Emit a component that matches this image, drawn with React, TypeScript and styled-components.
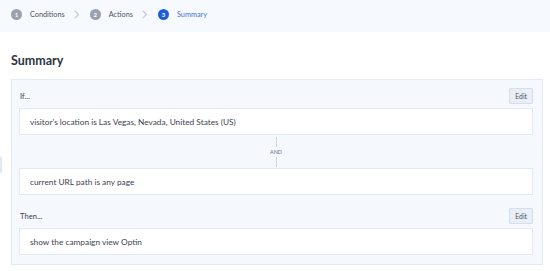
import React from "react";
import styled, { createGlobalStyle } from "styled-components";

const Global = createGlobalStyle`
  html, body {
    margin: 0;
    padding: 0;
    background: #ffffff;
    font-family: "Lato", "Open Sans", sans-serif;
    color: #3c4250;
  }
`;

const Page = styled.div`
  width: 550px;
  height: 271px;
  position: relative;
  overflow: hidden;
`;

const StepBar = styled.div`
  height: 32px;
  background: #f6f9fe;
  display: flex;
  align-items: center;
  padding-left: 11px;
  padding-bottom: 4px;
  box-sizing: border-box;
`;

const Step = styled.div<{ $active?: boolean }>`
  display: flex;
  align-items: center;
  gap: 8px;
  font-size: 7.3px;
  color: ${(p) => (p.$active ? "#3f72dc" : "#505563")};
`;

const StepNum = styled.span<{ $active?: boolean }>`
  width: 11px;
  height: 11px;
  border-radius: 50%;
  background: ${(p) => (p.$active ? "#1d5fd8" : "#9aa0b1")};
  color: #ffffff;
  font-size: 6px;
  font-weight: 700;
  display: flex;
  align-items: center;
  justify-content: center;
`;

const Chevron = styled.span`
  display: flex;
  margin: 0 10px 0 9px;
`;

const Content = styled.div`
  padding: 21px 7px 0 11px;
`;

const Heading = styled.h1`
  margin: 0 0 10px 0;
  font-size: 12.5px;
  font-weight: 700;
  color: #2e3442;
  line-height: 16px;
`;

const Panel = styled.div`
  border: 1px solid #e2e8f4;
  background: #f5f8fd;
  padding: 8px 9px 9px 7px;
  height: 186px;
  box-sizing: border-box;
`;

const HeaderRow = styled.div`
  display: flex;
  justify-content: space-between;
  align-items: center;
  height: 16px;
  margin-bottom: 4px;
  padding-left: 1px;
`;

const Label = styled.span`
  font-size: 7.6px;
  color: #3c4250;
`;

const EditButton = styled.button`
  height: 16px;
  padding: 0 5px;
  font-family: inherit;
  font-size: 6.8px;
  color: #4b5160;
  background: #e9eef7;
  border: 1px solid #d6deec;
  border-radius: 2px;
`;

const RuleBox = styled.div`
  height: 27px;
  box-sizing: border-box;
  background: #ffffff;
  border: 1px solid #e2e8f4;
  display: flex;
  align-items: center;
  padding-left: 10px;
  font-size: 8.3px;
  color: #3c4250;
`;

const Joiner = styled.div`
  display: flex;
  flex-direction: column;
  align-items: center;
  height: 33px;
  justify-content: center;
  gap: 2px;
`;

const Dash = styled.div`
  width: 0;
  height: 10px;
  border-left: 1px dashed #c9d1e0;
`;

const JoinText = styled.span`
  font-size: 5.5px;
  color: #6b7180;
  line-height: 6px;
`;

const ThenRow = styled(HeaderRow)`
  margin-top: 13px;
`;

const EdgeTab = styled.div`
  position: absolute;
  left: 0;
  top: 157px;
  width: 2px;
  height: 16px;
  background: #dfe8f7;
`;

const ChevronIcon = () => (
  <svg width="6" height="9" viewBox="0 0 6 9">
    <path d="M1 1l3.5 3.5L1 8" fill="none" stroke="#c5cad4" strokeWidth="1.2" />
  </svg>
);

export default function App() {
  return (
    <Page>
      <Global />
      <StepBar>
        <Step>
          <StepNum>1</StepNum>
          Conditions
        </Step>
        <Chevron>
          <ChevronIcon />
        </Chevron>
        <Step>
          <StepNum>2</StepNum>
          Actions
        </Step>
        <Chevron>
          <ChevronIcon />
        </Chevron>
        <Step $active>
          <StepNum $active>3</StepNum>
          Summary
        </Step>
      </StepBar>
      <Content>
        <Heading>Summary</Heading>
        <Panel>
          <HeaderRow>
            <Label>If...</Label>
            <EditButton>Edit</EditButton>
          </HeaderRow>
          <RuleBox>visitor's location is Las Vegas, Nevada, United States (US)</RuleBox>
          <Joiner>
            <Dash />
            <JoinText>AND</JoinText>
            <Dash />
          </Joiner>
          <RuleBox>current URL path is any page</RuleBox>
          <ThenRow>
            <Label>Then...</Label>
            <EditButton>Edit</EditButton>
          </ThenRow>
          <RuleBox>show the campaign view Optin</RuleBox>
        </Panel>
      </Content>
      <EdgeTab />
    </Page>
  );
}
